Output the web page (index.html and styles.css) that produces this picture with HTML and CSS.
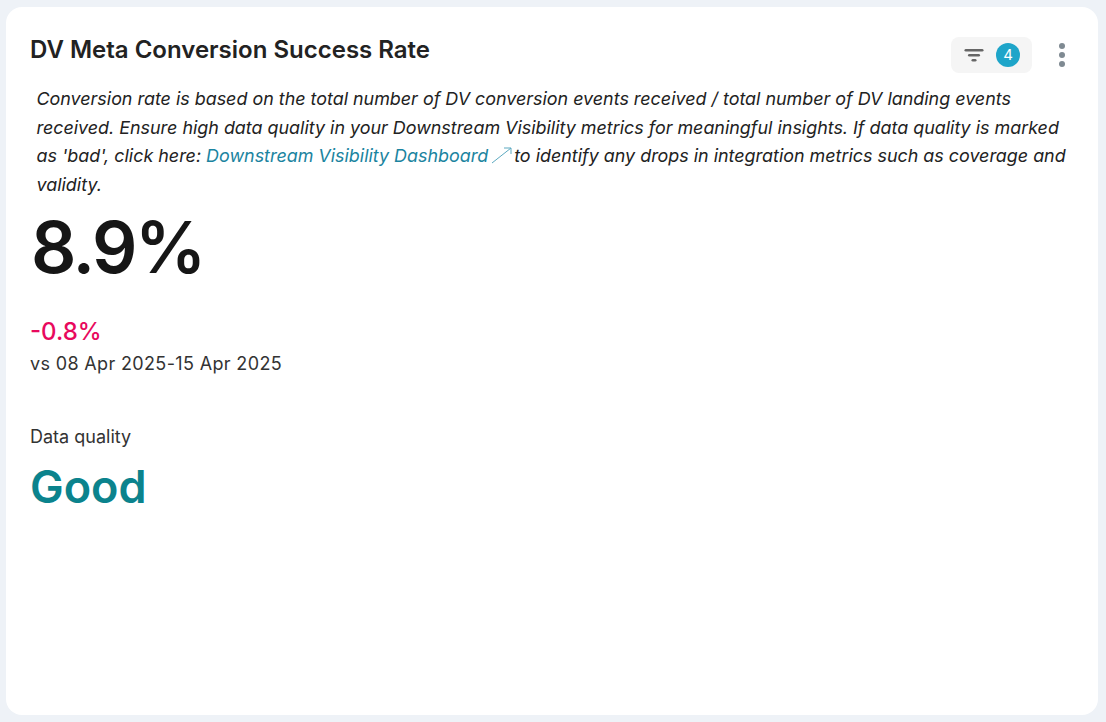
FILE: index.html
```html
<!DOCTYPE html>
<html lang="en">
<head>
<meta charset="utf-8">
<title>DV Meta Conversion Success Rate</title>
<link rel="stylesheet" href="styles.css">
</head>
<body>
<main class="card">
  <header class="card-head">
    <h1 class="title">DV Meta Conversion Success Rate</h1>
    <div class="actions">
      <div class="filter">
        <svg class="filter-icon" width="20" height="14" viewBox="0 0 20 14"><rect x="0.5" y="1" width="19" height="2.6" rx="1.3"/><rect x="4" y="6" width="12" height="2.6" rx="1.3"/><rect x="7.5" y="11" width="5" height="2.6" rx="1.3"/></svg>
        <span class="badge">4</span>
      </div>
      <svg class="more" width="8" height="26" viewBox="0 0 8 26"><circle cx="4" cy="4" r="3"/><circle cx="4" cy="13" r="3"/><circle cx="4" cy="22" r="3"/></svg>
    </div>
  </header>
  <p class="desc">Conversion rate is based on the total number of DV conversion events received / total number of DV landing events received. Ensure high data quality in your Downstream Visibility metrics for meaningful insights. If data quality is marked as 'bad', click here: <a class="link" href="#">Downstream Visibility Dashboard <svg class="ext" width="21" height="18" viewBox="0 0 21 18"><path d="M1 17 L20 2 M13 2 H20 V8"/></svg></a> to identify any drops in integration metrics such as coverage and validity.</p>
  <div class="value">8.9%</div>
  <div class="delta">-0.8%</div>
  <div class="compare">vs 08 Apr 2025-15 Apr 2025</div>
  <div class="dq-label">Data quality</div>
  <div class="dq-value">Good</div>
</main>
</body>
</html>
```
FILE: styles.css
```css
* { box-sizing: border-box; }
html, body { height: 100%; }
body {
  margin: 0;
  padding: 7px 8px 7px 6px;
  background: #eef2f7;
  font-family: Inter, "Liberation Sans", sans-serif;
  color: #222;
}
.card {
  height: 708px;
  background: #fff;
  border-radius: 16px;
  padding: 0 24px;
  overflow: hidden;
}
.card-head {
  display: flex;
  justify-content: space-between;
  align-items: flex-start;
  padding-top: 30px;
}
.title {
  margin: -1px 0 0;
  font-size: 24px;
  line-height: 28px;
  font-weight: 600;
  color: #222;
}
.actions { display: flex; align-items: center; gap: 26px; margin-right: 8px; }
.filter {
  display: flex;
  align-items: center;
  gap: 12px;
  width: 81px;
  height: 36px;
  padding-left: 13px;
  background: #f5f5f5;
  border-radius: 8px;
}
.filter-icon { fill: #666; }
.badge {
  width: 24px;
  height: 24px;
  border-radius: 50%;
  background: #1ea5c9;
  color: #fff;
  font-size: 15px;
  line-height: 24px;
  text-align: center;
}
.more { fill: #7f8a92; }
.desc {
  margin: 12px 0 0 6.5px;
  font-size: 17.9px;
  line-height: 28.5px;
  font-style: italic;
  color: #222;
}
.link { color: #1b84a0; text-decoration: none; }
.ext { vertical-align: -2px; margin-left: -2px; margin-right: -3px; fill: none; stroke: #5ca9c0; stroke-width: 1; }
.value {
  margin: 5px 0 0 1px;
  font-size: 71px;
  line-height: 87px;
  font-weight: 600;
  letter-spacing: -2.4px;
  color: #161616;
}
.delta {
  margin-top: 26px;
  font-size: 24px;
  line-height: 29px;
  font-weight: 500;
  color: #e8095d;
}
.compare { margin-top: 5px; font-size: 18px; line-height: 26px; letter-spacing: 0.35px; color: #333; }
.dq-label { margin-top: 47px; font-size: 18px; line-height: 26px; color: #333; }
.dq-value {
  margin-top: 10px;
  font-size: 45px;
  line-height: 54px;
  font-weight: 600;
  color: #0b838d;
}
```
